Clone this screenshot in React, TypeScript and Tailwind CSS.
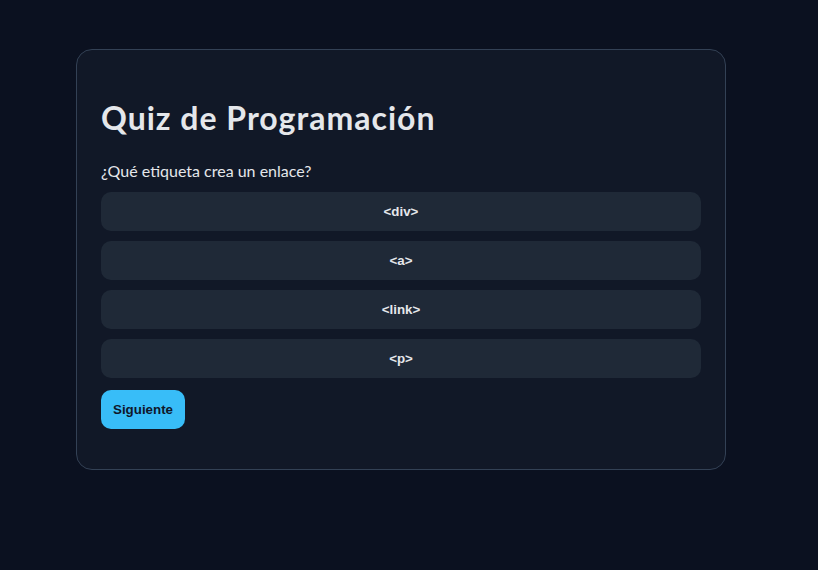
import React, { useState } from 'react';

const options = ['<div>', '<a>', '<link>', '<p>'];

export default function App() {
  const [selected, setSelected] = useState<number | null>(null);

  return (
    <div className="min-h-[570px] w-full bg-[#0b1120] pt-[49px] pl-[76px]">
      <div className="w-[650px] rounded-[16px] border border-[#334155] bg-[#111827] px-[24px] pt-[24px] pb-[40px] font-['Lato',sans-serif] text-[#e5e7eb]">
        {/* Title */}
        <h1 className="mt-[22px] mb-[21px] text-[32px] font-bold leading-[43px] tracking-[1px] text-[#e5e7eb]">
          Quiz de Programación
        </h1>

        <p className="mb-[10px] text-[16px] leading-[22px]">¿Qué etiqueta crea un enlace?</p>

        {/* Options */}
        <div className="flex flex-col gap-[10px]">
          {options.map((opt, i) => (
            <button
              key={opt}
              onClick={() => setSelected(i)}
              className={`h-[39px] w-full rounded-[10px] font-['Liberation_Sans',Arial,sans-serif] text-[13.33px] font-bold text-[#e5e7eb] ${
                selected === i ? 'bg-[#334155]' : 'bg-[#1f2937]'
              }`}
            >
              {opt}
            </button>
          ))}
        </div>

        <button className="mt-[12px] h-[39px] w-[84px] rounded-[10px] bg-[#38bdf8] font-['Liberation_Sans',Arial,sans-serif] text-[13.33px] font-bold text-[#0f172a]">
          Siguiente
        </button>
      </div>
    </div>
  );
}
